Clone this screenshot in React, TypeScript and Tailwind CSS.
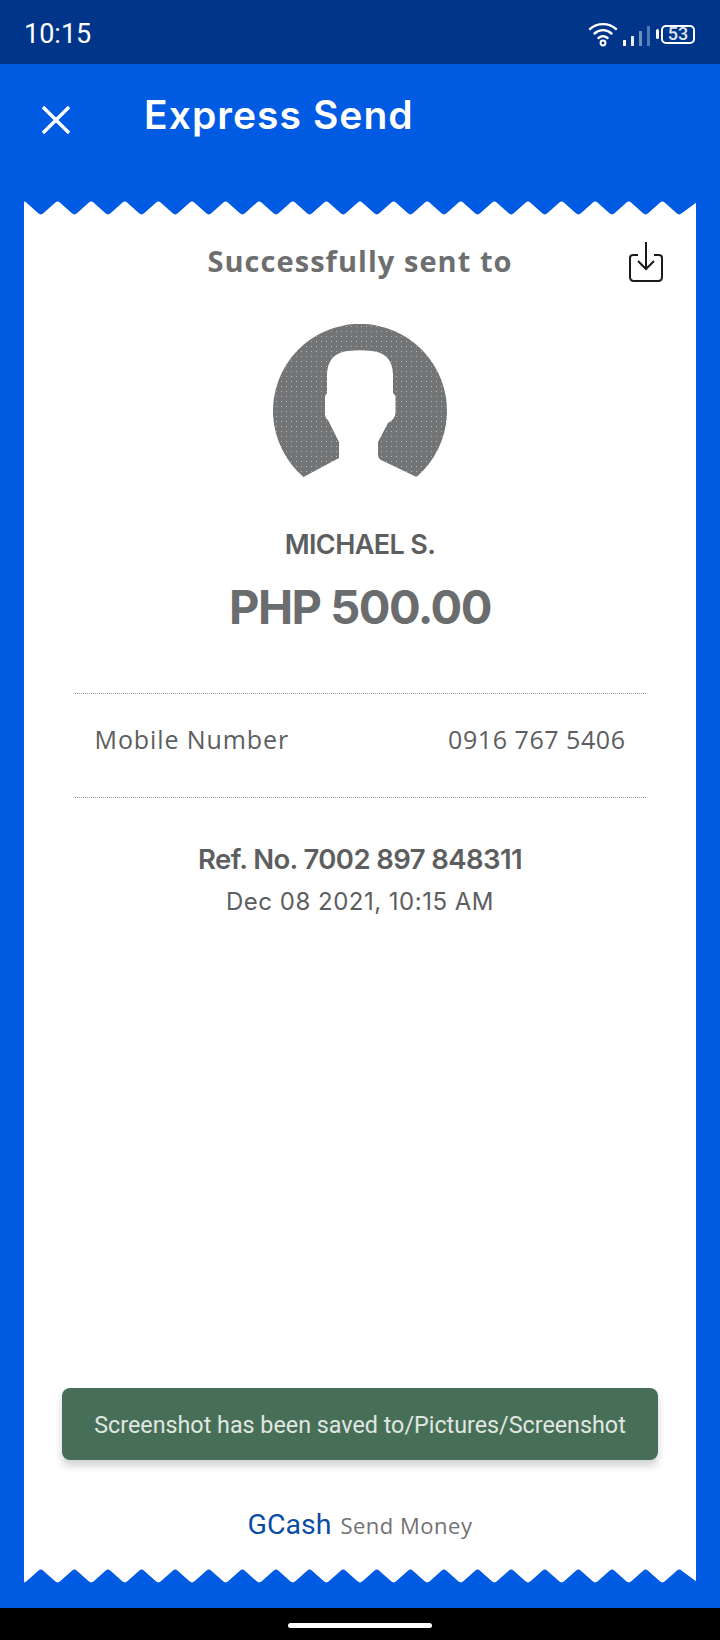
import React from "react";

const zigPath = (() => {
  const peak = 0.5;
  const valley = 15.5;
  const half = 16.8;
  const r = 2.5;
  const slope = (valley - peak) / half;
  let d = `M0 16 L0 ${peak + r * slope} Q0 ${peak} ${r} ${peak + r * slope}`;
  for (let k = 0; k < 20; k++) {
    const v = k * 33.6 + half;
    const p = (k + 1) * 33.6;
    d += ` L${(v - r).toFixed(1)} ${(valley - r * slope).toFixed(1)} Q${v.toFixed(1)} ${valley} ${(v + r).toFixed(1)} ${(valley - r * slope).toFixed(1)}`;
    d += k < 19
      ? ` L${(p - r).toFixed(1)} ${(peak + r * slope).toFixed(1)} Q${p.toFixed(1)} ${peak} ${(p + r).toFixed(1)} ${(peak + r * slope).toFixed(1)}`
      : ` L672 ${(peak + r * slope).toFixed(1)}`;
  }
  return d + " L672 16 Z";
})();

function Zig({ flip }: { flip?: boolean }) {
  return (
    <svg width="672" height="16" viewBox="0 0 672 16" className={flip ? "block -scale-y-100" : "block"}>
      <path d={zigPath} fill="#fff" />
    </svg>
  );
}

function Wifi() {
  return (
    <svg width="30" height="26" viewBox="0 0 30 26" fill="none" stroke="#fff" strokeWidth="2.4" strokeLinecap="round">
      <path d="M2 8 C9 1.5 21 1.5 28 8" />
      <path d="M6.5 12.5 C11.5 8 18.5 8 23.5 12.5" />
      <path d="M10.5 17 C13.5 14.5 16.5 14.5 19.5 17" />
      <circle cx="15" cy="22" r="2.4" strokeWidth="2" />
    </svg>
  );
}

function Signal() {
  return (
    <svg width="28" height="20" viewBox="0 0 28 20">
      <rect x="0" y="14" width="3" height="6" fill="#fff" rx="0.5" />
      <rect x="8" y="10" width="3" height="10" fill="#e6edf7" rx="0.5" />
      <rect x="16" y="5" width="3" height="15" fill="#6f8fc0" />
      <rect x="24" y="0" width="3" height="20" fill="#4f78b5" />
    </svg>
  );
}

function Avatar() {
  return (
    <svg width="176" height="160" viewBox="0 0 176 160" className="block">
      <defs>
        <pattern id="dots" width="5" height="5" patternUnits="userSpaceOnUse">
          <rect width="5" height="5" fill="#727475" />
          <rect x="1" y="1" width="1" height="1" fill="#b4b6b7" />
        </pattern>
      </defs>
      <path
        transform="translate(-272 -324)"
        fill="url(#dots)"
        d="M303.5 477 A87 87 0 1 1 416.5 477 L381 460 Q378 458 378 455 L378 442 L388 423 Q395 419 395.500 413 L395.500 396 L393 393 L393 374 Q392 353 372 351 Q360 349.500 348 351 Q328 353 327 374 L327 393 L325 396 L325 414 Q325 418 328 420 L339 442 L339 458 Z"
      />
    </svg>
  );
}

export default function App() {
  return (
    <div className="flex h-[1640px] w-[720px] flex-col overflow-hidden bg-[#005be2] font-['Inter',sans-serif]">
      <div className="flex h-16 shrink-0 items-center justify-between bg-[#00358a] pl-6 pr-[25px] pt-1">
        <span className="font-['Roboto',sans-serif] text-[27px] leading-[30px] text-white">10:15</span>
        <div className="flex items-center">
          <Wifi />
          <div className="ml-[5px] mt-[3px]"><Signal /></div>
          <div className="ml-[5px] h-[10px] w-[3px] rounded-sm bg-white" />
          <div className="ml-[2px] flex h-[19px] w-[34px] items-center justify-center rounded-[5px] border-2 border-white font-['Roboto',sans-serif] text-[18px] font-medium leading-none text-[#dfe8f5]">53</div>
        </div>
      </div>

      <div className="flex h-[136px] shrink-0 items-start">
        <svg width="28" height="28" viewBox="0 0 28 28" className="ml-[42px] mt-[42px]" fill="none" stroke="#fff" strokeWidth="3.4">
          <path d="M1 1 L27 27 M27 1 L1 27" />
        </svg>
        <h1 className="ml-[74px] mt-[26px] text-[39px] font-semibold leading-[50px] tracking-[1.05px] text-white">Express Send</h1>
      </div>

      <div className="mx-6 flex w-[672px] flex-col">
        <Zig />
        <div className="relative flex h-[1352px] flex-col items-center bg-white text-[#5c5e60]">
          <svg width="36" height="42" viewBox="0 0 36 42" className="absolute left-[604px] top-[25px]" fill="none" stroke="#1a1a1a" strokeWidth="2">
            <path d="M10 14 H5 Q2 14 2 17 V36 Q2 40 6 40 H30 Q34 40 34 36 V17 Q34 14 31 14 H26" />
            <path d="M18 1 V28 M10 20 L18 28 L26 20" />
          </svg>

          <p className="mt-[27px] font-['Open_Sans',sans-serif] text-[29px] font-bold leading-[36px] tracking-[1.05px] text-[#6d6e70]">Successfully sent to</p>
          <div className="mt-[45px]"><Avatar /></div>
          <p className="mt-[44px] text-[27px] font-semibold leading-[34px] tracking-[-0.6px]">MICHAEL S.</p>
          <p className="mt-[15px] text-[47px] font-bold leading-[60px] tracking-[-1.5px] text-[#6a6c6e]">PHP 500.00</p>

          <div className="mt-[56px] flex h-[105px] w-[571px] items-center justify-between border-y border-dotted border-[#9a9a9a] px-5 pb-[14px] font-['Open_Sans',sans-serif] text-[25px] leading-[34px] tracking-[0.55px]">
            <span className="tracking-[0.9px]">Mobile Number</span>
            <span>0916 767 5406</span>
          </div>

          <p className="mt-[44px] text-[27.5px] font-semibold leading-[34px] tracking-[-0.6px]">Ref. No. 7002 897 848311</p>
          <p className="mt-[9px] text-[24px] leading-[34px] tracking-[0.5px]">Dec 08 2021, 10:15 AM</p>

          <div className="mt-auto mb-[25px] flex items-baseline">
            <span className="font-['Roboto',sans-serif] text-[28.5px] leading-[36px] text-[#0b4ca6]">GCash</span>
            <span className="ml-[9px] font-['Open_Sans',sans-serif] text-[22px] leading-[36px] tracking-[0.5px] text-[#727274]">Send Money</span>
          </div>

          <div className="absolute left-[38px] top-[1172px] flex h-[72px] w-[596px] items-center justify-center rounded-lg bg-[#476f57] pt-[3px] font-['Roboto',sans-serif] text-[23.3px] text-[#e0e7e2] shadow-[0_6px_8px_rgba(0,0,0,0.18)]">
            Screenshot has been saved to/Pictures/Screenshot
          </div>
        </div>
        <Zig flip />
      </div>

      <div className="mt-auto flex h-8 shrink-0 justify-center bg-black pt-[15px]">
        <div className="h-[5px] w-36 rounded-full bg-white" />
      </div>
    </div>
  );
}
